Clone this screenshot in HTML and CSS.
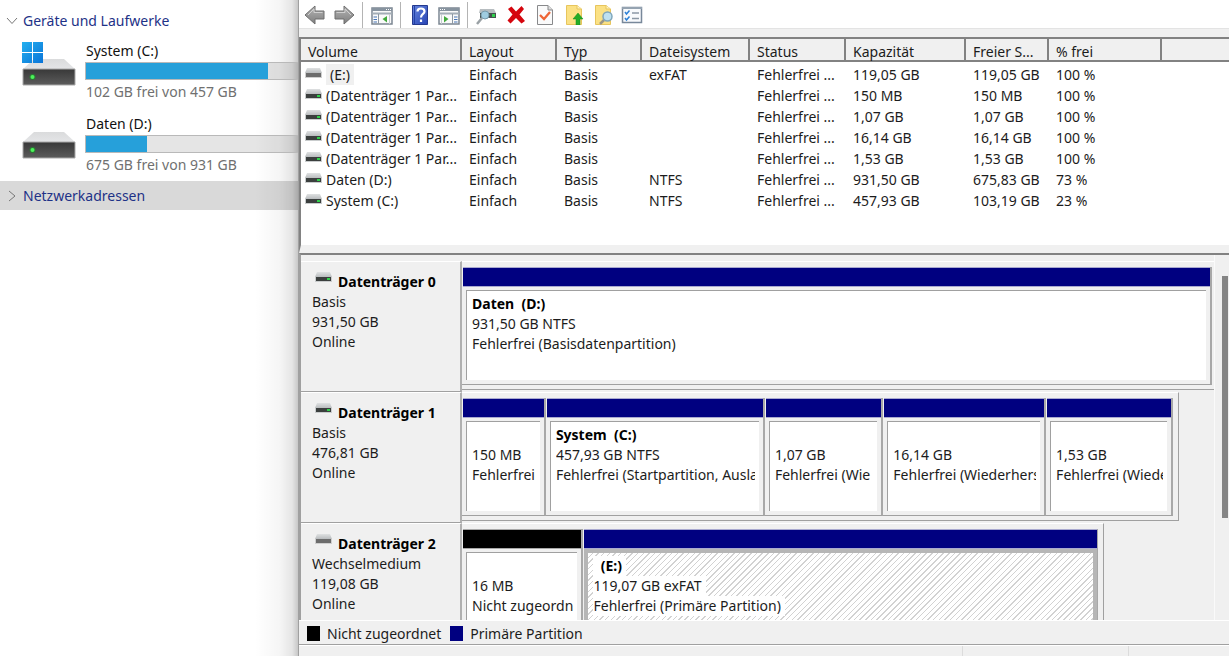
FILE: index.html
```html
<!DOCTYPE html>
<html lang="de">
<head>
<meta charset="utf-8">
<title>Datenträgerverwaltung</title>
<link rel="stylesheet" href="styles.css">
</head>
<body>
<svg class="defs" aria-hidden="true">
  <defs>
    <linearGradient id="gTop" x1="0" y1="0" x2="0" y2="1"><stop offset="0" stop-color="#dadbdc"/><stop offset="1" stop-color="#e4e5e7"/></linearGradient>
    <linearGradient id="gFront" x1="0" y1="0" x2="0" y2="1"><stop offset="0" stop-color="#383838"/><stop offset="1" stop-color="#5c5c5c"/></linearGradient>
    <linearGradient id="gWin" x1="0" y1="0" x2="1" y2="1"><stop offset="0" stop-color="#23b0ef"/><stop offset="1" stop-color="#0a74d8"/></linearGradient>
    <linearGradient id="gArrow" x1="0" y1="0" x2="0" y2="1"><stop offset="0" stop-color="#b5b5b5"/><stop offset="1" stop-color="#7e7e7e"/></linearGradient>
    <linearGradient id="gHelp" x1="0" y1="0" x2="1" y2="1"><stop offset="0" stop-color="#6686de"/><stop offset="1" stop-color="#2744b4"/></linearGradient>
    <linearGradient id="gCap" x1="0" y1="0" x2="0" y2="1"><stop offset="0" stop-color="#dfe1e2"/><stop offset="1" stop-color="#b9bcbe"/></linearGradient>
    <symbol id="drive" viewBox="0 0 54 28">
      <path d="M12 1H42L53 11H1Z" fill="url(#gTop)"/>
      <path d="M1 11H53V27H1Z" fill="url(#gFront)" stroke="#a9a9a9"/>
      <circle cx="10.500" cy="19" r="3" fill="#2a7a33"/><circle cx="10.500" cy="19" r="2" fill="#4cf25a"/>
    </symbol>
    <symbol id="hdd" viewBox="0 0 17 11">
      <path d="M2 0H15L17 5H0Z" fill="url(#gCap)"/><path d="M0 5H17V10H0Z" fill="#c9cccd"/>
      <path d="M1 5H16V9H1Z" fill="#3b3f3e"/><path d="M12 6H15V8H12Z" fill="#2fd04a"/>
    </symbol>
    <symbol id="stick" viewBox="0 0 17 11">
      <path d="M2 0H15L17 5H0Z" fill="url(#gCap)"/><path d="M0 5H17V10H0Z" fill="#cfcfcf"/>
      <path d="M1 5H16V9H1Z" fill="#6c6c6c"/>
    </symbol>
    <symbol id="arrow" viewBox="0 0 22 20">
      <path d="M1 10L11 1V6H20V14H11V19Z" fill="url(#gArrow)" stroke="#6f6f6f"/><path d="M4 10L10 4V7.500H18.500" fill="none" stroke="#d0d0d0"/>
    </symbol>
    <symbol id="pane" viewBox="0 0 22 18">
      <path d="M1 1H21V17H1Z" fill="#fafafa" stroke="#7c8792" stroke-width="1.500"/><path d="M1 1H21V4H1Z" fill="#87939f"/>
      <path d="M15 2.500H16M17 2.500H18M19 2.500H20" stroke="#fff"/><path d="M1 6.500H21" stroke="#a3adb6" stroke-width="2"/>
      <path d="M7.500 7V17" stroke="#8c97a2"/><path d="M2.500 10H6M2.500 12.500H6M2.500 15H6" stroke="#4774b5"/>
      <path d="M16 9V15.500L11.500 12Z" fill="#42aa3c"/><path d="M18.500 7V17" stroke="#c5cbd0"/>
    </symbol>
  </defs>
</svg>

<aside class="explorer">
  <button class="group"><svg class="chev" viewBox="0 0 12 12"><path d="M1 3L6 8.500L11 3"/></svg>Geräte und Laufwerke</button>
  <div class="volume">
    <svg class="volume-icon" viewBox="0 0 54 44">
      <use href="#drive" y="16" width="54" height="28"/>
      <path d="M0 0H10V10H0ZM11 0H21V10H11ZM0 11H10V21H0ZM11 11H21V21H11Z" fill="url(#gWin)"/>
    </svg>
    <div class="volume-info"><span>System (C:)</span><div class="usage"><div class="used used-c"></div></div><span class="free">102 GB frei von 457 GB</span></div>
  </div>
  <div class="volume">
    <svg class="volume-icon" viewBox="0 0 54 44"><use href="#drive" y="16" width="54" height="28"/></svg>
    <div class="volume-info"><span>Daten (D:)</span><div class="usage"><div class="used used-d"></div></div><span class="free">675 GB frei von 931 GB</span></div>
  </div>
  <button class="group selected"><svg class="chev" viewBox="0 0 12 12"><path d="M3 1L9 6L3 11"/></svg>Netzwerkadressen</button>
</aside>

<main class="manager">
  <div class="toolbar">
    <button aria-label="Zurück"><svg viewBox="0 0 22 20"><use href="#arrow"/></svg></button>
    <button aria-label="Vorwärts"><svg class="flip" viewBox="0 0 22 20"><use href="#arrow"/></svg></button>
    <span class="sep"></span>
    <button aria-label="Konsolenstruktur"><svg viewBox="0 -2 22 20"><use href="#pane" width="22" height="18"/></svg></button>
    <span class="sep"></span>
    <button aria-label="Hilfe"><svg viewBox="0 0 22 20"><path d="M3.500.500H18.500V19.500H3.500Z" fill="url(#gHelp)" stroke="#24398f"/><path d="M5.500 1V19" stroke="#2341a5"/><path d="M8.500 6.500C8.500 2.500 15.500 2.500 15.500 6.500C15.500 9 12 9 12 12.500M12 14.500V17" fill="none" stroke="#fff" stroke-width="2.200"/></svg></button>
    <button aria-label="Aktionsbereich"><svg class="flip" viewBox="0 -2 22 20"><use href="#pane" width="22" height="18"/></svg></button>
    <span class="sep"></span>
    <button aria-label="Datenträger neu einlesen"><svg viewBox="0 0 22 20"><path d="M4 4H18L20 8H3Z" fill="#b7bdc0"/><path d="M4 8H20V13H4Z" fill="#46504e"/><path d="M16 9H19V12H16Z" fill="#2fcf4c"/><circle cx="9" cy="10" r="4" fill="#9fcce0" stroke="#7799aa"/><path d="M6 13L1 19" stroke="#9aa1a5" stroke-width="2.500"/></svg></button>
    <button aria-label="Löschen"><svg viewBox="0 0 22 20"><path d="M3 4L6.500 1.500L11 6.500L16.500 1L19 4L14.500 9.500L20 16L16.500 18.500L11 13L5.500 18.500L2.500 15.500L7.500 9.500Z" fill="#d5060e"/></svg></button>
    <button aria-label="Eigenschaften"><svg viewBox="0 0 22 20"><path d="M3.500.500H14L18.500 5V19.500H3.500Z" fill="#fafafa" stroke="#88898b"/><path d="M14 .500V5H18.500" fill="#ddd" stroke="#88898b"/><path d="M6 10L10 14L16 7" fill="none" stroke="#ee6535" stroke-width="2.300"/></svg></button>
    <button aria-label="Übergeordnet"><svg viewBox="0 0 22 20"><path d="M3.500.500H14L18.500 4V19.500H3.500Z" fill="#fbe184" stroke="#e7c55d"/><path d="M14 .500V4H18.500" fill="#fff3bd" stroke="#e7c55d"/><path d="M15 8L20 14H17V20H13V14H10Z" fill="#23ac27" stroke="#178d1d" stroke-width=".500"/></svg></button>
    <button aria-label="Suchen"><svg viewBox="0 0 22 20"><path d="M3.500.500H14L18.500 4V19.500H3.500Z" fill="#fbe184" stroke="#e7c55d"/><path d="M14 .500V4H18.500" fill="#fff3bd" stroke="#e7c55d"/><path d="M12 15L8 19" stroke="#9c9686" stroke-width="2.500"/><circle cx="15.500" cy="11.500" r="4.500" fill="#bfe1f1" stroke="#7fa6bb" stroke-width="1.500"/></svg></button>
    <button aria-label="Aufgabenliste"><svg viewBox="0 0 22 20"><path d="M1.500 2.500H20.500V17.500H1.500Z" fill="#f8fafc" stroke="#78889a" stroke-width="1.500"/><path d="M1 3H21" stroke="#95a3b1" stroke-width="2"/><path d="M4 7L5.500 9L8.500 5.500M4 13L5.500 15L8.500 11.500" fill="none" stroke="#2c80d8" stroke-width="1.500"/><path d="M11 8H18M11 13.500H18" stroke="#8b98a5" stroke-width="1.500"/></svg></button>
  </div>

  <div class="volumes">
    <table>
      <colgroup><col class="c1"><col class="c2"><col class="c3"><col class="c4"><col class="c5"><col class="c6"><col class="c7"><col class="c8"><col></colgroup>
      <thead><tr><th>Volume</th><th>Layout</th><th>Typ</th><th>Dateisystem</th><th>Status</th><th>Kapazität</th><th>Freier S...</th><th>% frei</th><th></th></tr></thead>
      <tbody>
        <tr><td><svg class="mini"><use href="#stick"/></svg><span class="focus">(E:)</span></td><td>Einfach</td><td>Basis</td><td>exFAT</td><td>Fehlerfrei ...</td><td>119,05 GB</td><td>119,05 GB</td><td>100 %</td><td></td></tr>
        <tr><td><svg class="mini"><use href="#hdd"/></svg>(Datenträger 1 Par...</td><td>Einfach</td><td>Basis</td><td></td><td>Fehlerfrei ...</td><td>150 MB</td><td>150 MB</td><td>100 %</td><td></td></tr>
        <tr><td><svg class="mini"><use href="#hdd"/></svg>(Datenträger 1 Par...</td><td>Einfach</td><td>Basis</td><td></td><td>Fehlerfrei ...</td><td>1,07 GB</td><td>1,07 GB</td><td>100 %</td><td></td></tr>
        <tr><td><svg class="mini"><use href="#hdd"/></svg>(Datenträger 1 Par...</td><td>Einfach</td><td>Basis</td><td></td><td>Fehlerfrei ...</td><td>16,14 GB</td><td>16,14 GB</td><td>100 %</td><td></td></tr>
        <tr><td><svg class="mini"><use href="#hdd"/></svg>(Datenträger 1 Par...</td><td>Einfach</td><td>Basis</td><td></td><td>Fehlerfrei ...</td><td>1,53 GB</td><td>1,53 GB</td><td>100 %</td><td></td></tr>
        <tr><td><svg class="mini"><use href="#hdd"/></svg>Daten (D:)</td><td>Einfach</td><td>Basis</td><td>NTFS</td><td>Fehlerfrei ...</td><td>931,50 GB</td><td>675,83 GB</td><td>73 %</td><td></td></tr>
        <tr><td><svg class="mini"><use href="#hdd"/></svg>System (C:)</td><td>Einfach</td><td>Basis</td><td>NTFS</td><td>Fehlerfrei ...</td><td>457,93 GB</td><td>103,19 GB</td><td>23 %</td><td></td></tr>
      </tbody>
    </table>
  </div>

  <div class="graph">
    <div class="disks">
      <section class="disk">
        <div class="label"><h2><svg class="mini"><use href="#hdd"/></svg>Datenträger 0</h2><p>Basis</p><p>931,50 GB</p><p>Online</p></div>
        <div class="lane"><div class="parts disk-0">
          <div class="part"><div class="bar"></div><div class="body"><b>Daten&nbsp; (D:)</b><p>931,50 GB NTFS</p><p>Fehlerfrei (Basisdatenpartition)</p></div></div>
        </div></div>
      </section>
      <section class="disk">
        <div class="label"><h2><svg class="mini"><use href="#hdd"/></svg>Datenträger 1</h2><p>Basis</p><p>476,81 GB</p><p>Online</p></div>
        <div class="lane"><div class="parts disk-1">
          <div class="part"><div class="bar"></div><div class="body"><b></b><p>150 MB</p><p>Fehlerfrei</p></div></div>
          <div class="part"><div class="bar"></div><div class="body"><b>System&nbsp; (C:)</b><p>457,93 GB NTFS</p><p>Fehlerfrei (Startpartition, Ausla</p></div></div>
          <div class="part"><div class="bar"></div><div class="body"><b></b><p>1,07 GB</p><p>Fehlerfrei (Wie</p></div></div>
          <div class="part"><div class="bar"></div><div class="body"><b></b><p>16,14 GB</p><p>Fehlerfrei (Wiederhers</p></div></div>
          <div class="part"><div class="bar"></div><div class="body"><b></b><p>1,53 GB</p><p>Fehlerfrei (Wiede</p></div></div>
        </div></div>
      </section>
      <section class="disk">
        <div class="label"><h2><svg class="mini"><use href="#stick"/></svg>Datenträger 2</h2><p>Wechselmedium</p><p>119,08 GB</p><p>Online</p></div>
        <div class="lane"><div class="parts disk-2">
          <div class="part unallocated"><div class="bar"></div><div class="body"><b></b><p>16 MB</p><p>Nicht zugeordn</p></div></div>
          <div class="part active"><div class="bar"></div><div class="body"><b>&nbsp; (E:)</b><p>119,07 GB exFAT</p><p>Fehlerfrei (Primäre Partition)</p></div></div>
        </div></div>
      </section>
    </div>
    <div class="scroll"><div class="thumb"></div></div>
  </div>

  <div class="legend"><span class="swatch black"></span>Nicht zugeordnet<span class="swatch"></span>Primäre Partition</div>
  <footer class="status"><span></span><span></span><span></span></footer>
</main>
</body>
</html>
```
FILE: styles.css
```css
* { box-sizing: border-box; }
body {
  margin: 0;
  height: 100vh;
  display: flex;
  overflow: hidden;
  background: #fff;
  color: #1c1c1c;
  font: 14px/20px "Noto Sans", "Open Sans", sans-serif;
}
p, h2 { margin: 0; font-size: inherit; }
button { font: inherit; border: 0; padding: 0; background: none; }
.defs { position: absolute; width: 0; height: 0; }

/* Explorer */
.explorer {
  flex: 0 0 298px;
  background: linear-gradient(to right, transparent 255px, rgba(0, 0, 0, .04) 280px, rgba(0, 0, 0, .1) 292px, rgba(0, 0, 0, .22));
  padding-top: 6px;
  overflow: hidden;
}
.group {
  display: flex;
  align-items: center;
  gap: 5px;
  width: 100%;
  height: 29px;
  padding-left: 6px;
  color: #1e3287;
  white-space: nowrap;
}
.group.selected { background: rgba(0, 0, 0, .15); }
.chev { width: 12px; height: 12px; fill: none; stroke: #777; }
.volume { display: flex; gap: 9px; height: 73px; padding: 6px 0 0 22px; }
.volume-icon { width: 54px; height: 44px; flex: none; margin-top: 1px; }
.volume-info { flex: 1; color: #111; white-space: nowrap; }
.volume-info span { display: block; padding-left: 1px; }
.volume-info .free { color: #707070; }
.usage { height: 18px; margin: 1px 0 2px; border: 1px solid #b9b9b9; border-right: 0; background: rgba(0, 0, 0, .1); }
.used { height: 100%; background: #26a0da; }
.used-c { width: 86%; }
.used-d { width: 29%; }

/* Disk management window */
.manager {
  flex: 1;
  min-width: 0;
  display: flex;
  flex-direction: column;
  background: #f0f0f0;
  border-left: 1px solid #a0a0a0;
}
.toolbar {
  display: flex;
  align-items: center;
  gap: 7px;
  height: 29px;
  padding: 2px 5px 0;
  background: #fff;
  border-bottom: 1px solid #e3e3e3;
}
.toolbar button { width: 22px; height: 20px; }
.toolbar svg { display: block; width: 22px; height: 20px; }
.flip { transform: scaleX(-1); }
.sep { width: 2px; height: 26px; border-left: 1px solid #b4b4b4; }

.volumes {
  height: 216px;
  margin-top: 8px;
  background: #fff;
  border-top: 2px solid #828282;
  border-left: 2px solid #828282;
  border-bottom: 8px solid #f0f0f0;
}
table { width: 100%; table-layout: fixed; border-collapse: separate; border-spacing: 0; }
.c1 { width: 161px; } .c2 { width: 95px; } .c3 { width: 85px; } .c4 { width: 108px; }
.c5 { width: 96px; } .c6 { width: 120px; } .c7 { width: 83px; } .c8 { width: 113px; }
th {
  height: 23px;
  padding: 4px 0 0 7px;
  font-weight: 400;
  line-height: 17px;
  text-align: left;
  background: #f0f0f0;
  border-right: 2px solid #828282;
  border-bottom: 2px solid #828282;
}
th:last-child { border-right: 0; }
tr:first-child td { height: 23px; padding-top: 2px; }
td { height: 21px; padding: 0 0 0 7px; line-height: 21px; white-space: nowrap; }
td:first-child { padding-left: 4px; }
.mini { width: 17px; height: 11px; margin-right: 4px; vertical-align: 1px; }
.focus { display: inline-block; padding: 0 4px; background: #f0f0f0; }

.graph {
  flex: 1;
  min-height: 0;
  display: flex;
  border-top: 2px solid #828282;
  border-left: 2px solid #a0a0a0;
}
.disks { flex: 1; min-width: 0; padding-top: 6px; overflow: hidden; border-right: 1px solid #fafafa; }
.disk { display: flex; height: 131px; }
.label {
  flex: 0 0 161px;
  height: 131px;
  padding: 10px 0 0 11px;
  border-top: 1px solid #fff;
  border-right: 2px solid #b0b0b0;
  border-bottom: 1px solid #a0a0a0;
}
.label .mini { margin: 0 6px 0 3px; vertical-align: 4px; }
.label h2 { color: #000; font-weight: 700; }
.lane { flex: 1; min-width: 0; }
.parts {
  display: flex;
  height: 129px;
  padding: 5px 5px 4px 0;
  border-top: 1px solid #fff;
  border-right: 1px solid #a0a0a0;
  border-bottom: 1px solid #a0a0a0;
}
.disk-0 { padding-right: 2px; border-right: 0; }
.disk-1 { width: 95.400%; }
.disk-2 { width: 85.400%; }
.part {
  flex: 1 1 0;
  min-width: 0;
  display: flex;
  flex-direction: column;
  border-right: 2px solid #a8a8a8;
  border-bottom: 1px solid #a0a0a0;
}
.disk-1 .part:nth-child(1) { flex-grow: 83; }
.disk-1 .part:nth-child(2) { flex-grow: 220; }
.disk-1 .part:nth-child(3) { flex-grow: 118; }
.disk-1 .part:nth-child(4) { flex-grow: 163; }
.disk-1 .part:nth-child(5) { flex-grow: 127; }
.disk-2 .part:nth-child(1) { flex-grow: 120; }
.disk-2 .part:nth-child(2) { flex-grow: 516; }
.bar { height: 20px; margin-left: 1px; background: #000080; border: 1px solid #a9a9d0; border-width: 1px 0; }
.unallocated .bar { background: #000; border-color: #a8a8a8; }
.body {
  flex: 1;
  margin: 3px 4px 4px 4px;
  padding: 3px 4px 0 5px;
  background: #fff;
  border-top: 1px solid #a0a0a0;
  border-left: 1px solid #a0a0a0;
  overflow: hidden;
  white-space: nowrap;
}
.body b { display: block; min-height: 20px; color: #000; }
.body p { overflow: hidden; }
.active { border-right-width: 1px; }
.active .body {
  margin: 0 0 0 1px;
  border: 4px solid #b6b6b6;
  padding: 3px 5px 0;
  background: repeating-linear-gradient(135deg, #fff 0 3px, #d2d2d2 3px 4px);
}
.active .body b, .active .body p { width: fit-content; padding-right: 4px; background: #fff; }

.scroll { flex: 0 0 14px; padding: 21px 0 0 7px; }
.thumb { width: 6px; height: 242px; background: #858585; }

.legend {
  display: flex;
  align-items: center;
  gap: 7px;
  height: 25px;
  padding: 2px 0 0 8px;
  border-top: 1px solid #fff;
  border-bottom: 1px solid #a0a0a0;
}
.swatch { width: 13px; height: 15px; background: #000080; }
.swatch.black { background: #000; }
.swatch + .swatch { margin-left: 2px; }
.status { display: flex; height: 11px; border-top: 1px solid #fff; }
.status span { flex: 0 0 166px; border-right: 1px solid #dcdcdc; }
.status span:first-child { flex: 1; }
.status span:last-child { flex: 0 0 100px; border-right: 0; }
```
